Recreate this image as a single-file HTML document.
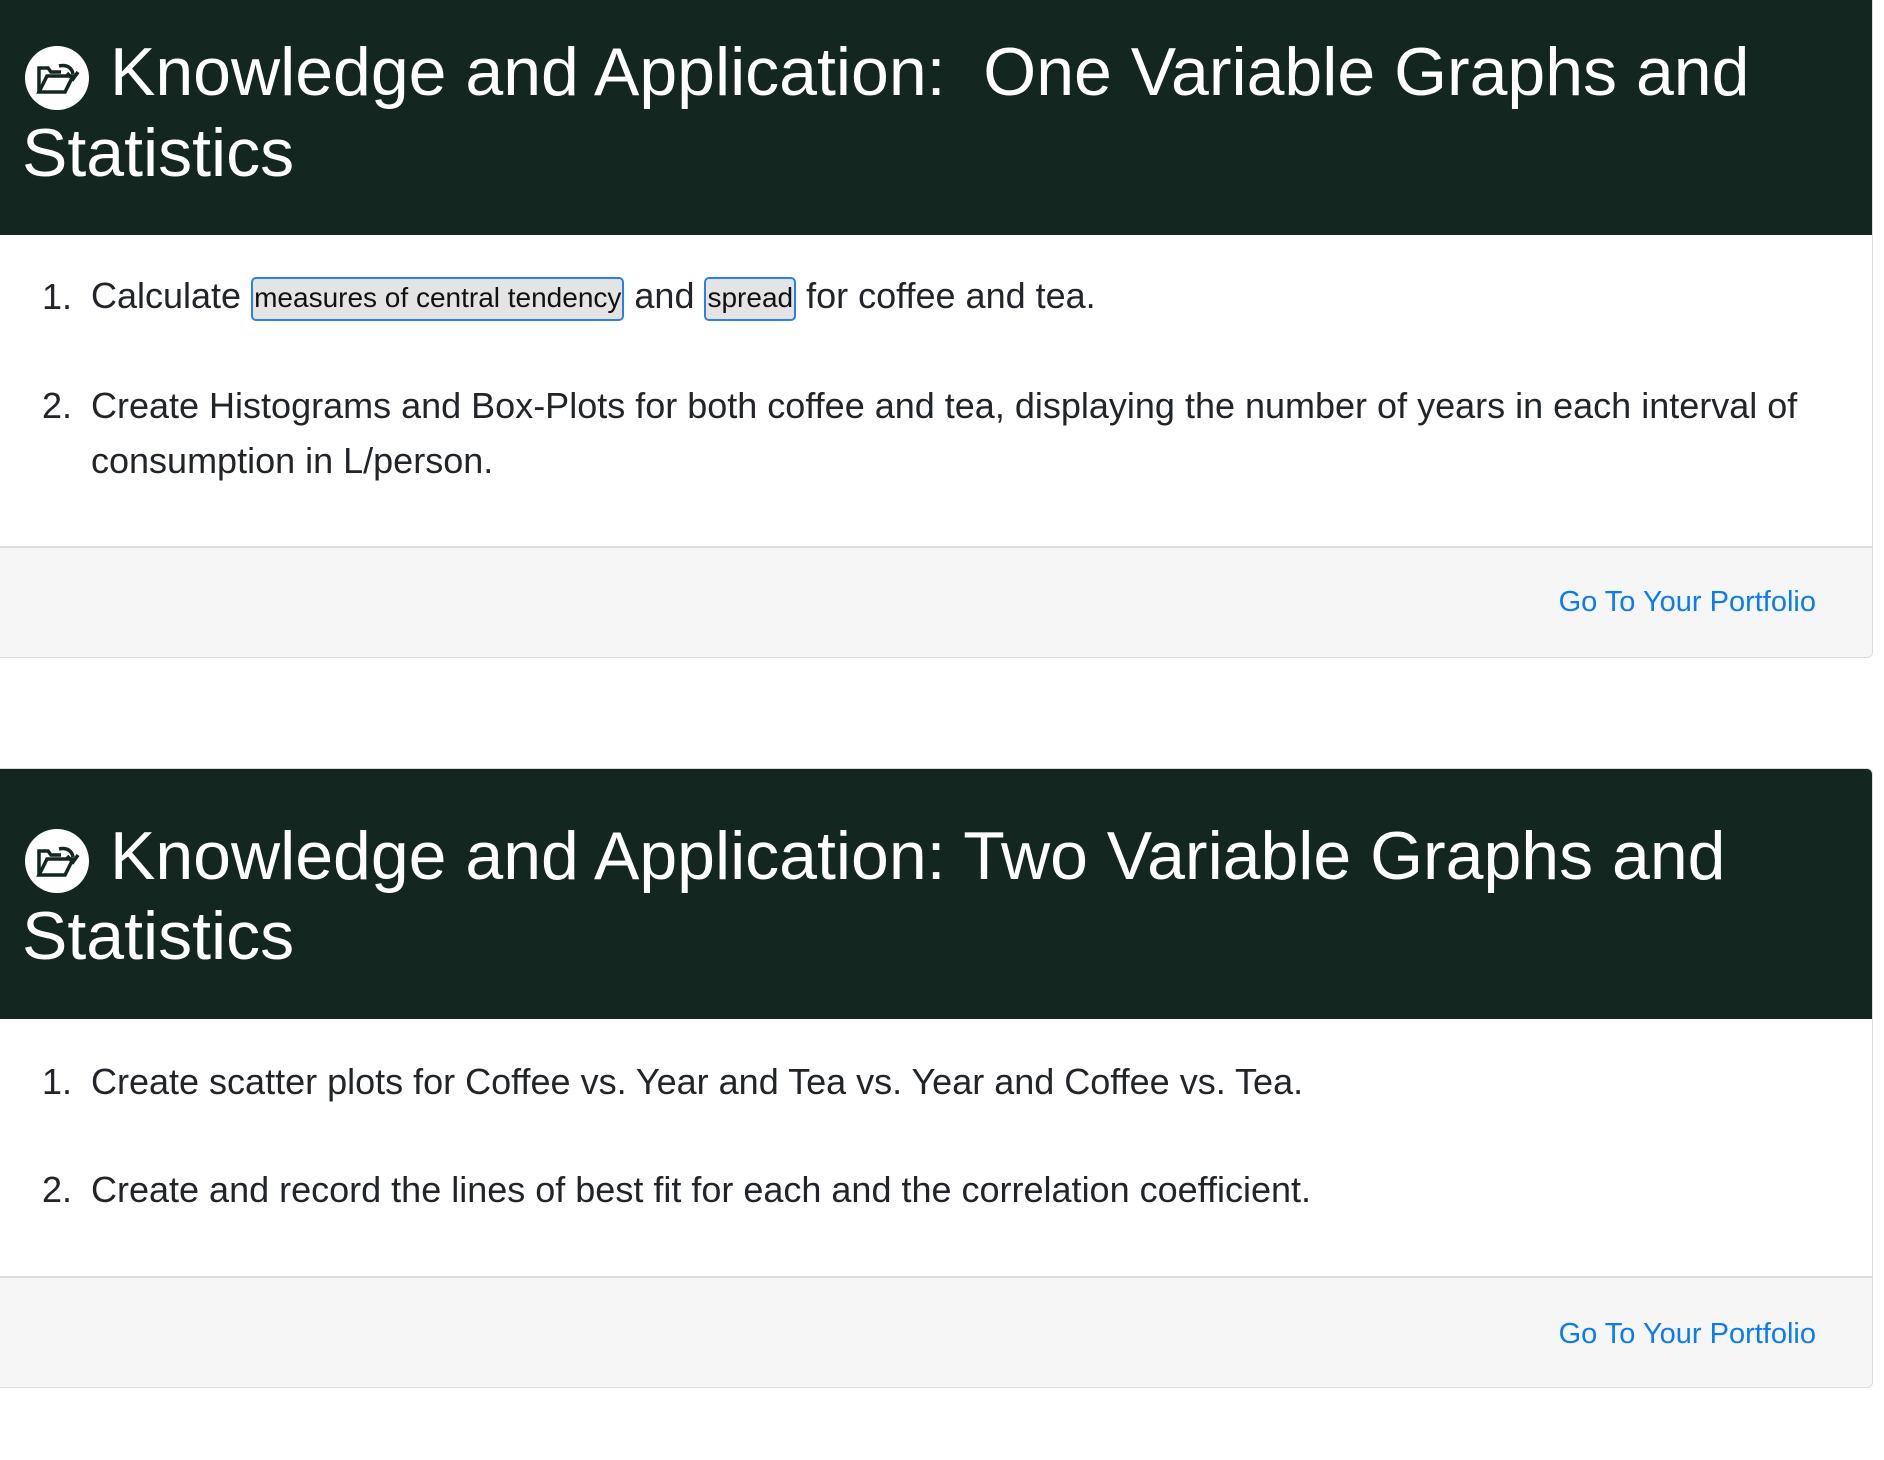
<!DOCTYPE html>
<html><head><meta charset="utf-8"><style>
html,body{margin:0;padding:0;background:#fff;width:1884px;height:1460px;overflow:hidden;font-family:"Liberation Sans",Arial,sans-serif;color:#212529}
.abs{position:absolute}
.card{position:absolute;left:0;width:1872px;border:1px solid #dcdcdc;border-left:none;border-radius:0 6px 6px 0;background:#fff;overflow:hidden}
.hd{position:absolute;left:0;right:0;top:0;background:#13261f}
.ft{position:absolute;left:0;right:0;background:#f6f6f6;border-top:2px solid #dcdcdc}
.t{position:absolute;left:0;white-space:nowrap;color:#fff;font-size:68px;line-height:1}
.li{position:absolute;font-size:36px;white-space:nowrap;line-height:1}
.link{position:absolute;right:56px;font-size:29px;color:#0a7bf5;white-space:nowrap;line-height:1}
.chip{display:inline-block;background:#e4e4e4;border:2px solid #2a7ff0;border-radius:5px;font-size:28px;color:#111;padding:5px 1px 7px;vertical-align:1px;line-height:1}
</style></head><body>

<div class="card" style="top:-10px;height:666px">
  <div class="hd" style="height:244px"></div>
  <svg class="abs" style="left:25px;top:55px" width="64" height="64" viewBox="0 0 64 64"><circle cx="32" cy="32" r="32" fill="#fff"/><path d="M14 46V22h9l3 4h10" fill="none" stroke="#13261f" stroke-width="3.5"/><path d="M14 46l8-16h26l-8 16z" fill="none" stroke="#13261f" stroke-width="3.5"/><path d="M34 20c8-2 13 2 14 8" fill="none" stroke="#13261f" stroke-width="3.5"/><path d="M42 27l6 6 5-7" fill="none" stroke="#13261f" stroke-width="3.5"/></svg>
  <div class="t" style="left:110px;top:47px">Knowledge and Application:&nbsp; One Variable Graphs and</div>
  <div class="t" style="left:22px;top:128px">Statistics</div>
  <div class="li" style="left:42px;top:288px">1.</div>
  <div class="li" style="left:91px;top:286px">Calculate <span class="chip">measures of central tendency</span> and <span class="chip">spread</span> for coffee and tea.</div>
  <div class="li" style="left:42px;top:397px">2.</div>
  <div class="li" style="left:91px;top:397px">Create Histograms and Box-Plots for both coffee and tea, displaying the number of years in each interval of</div>
  <div class="li" style="left:91px;top:452px">consumption in L/person.</div>
  <div class="ft" style="top:555px;height:111px"></div>
  <div class="link" style="top:597px">Go To Your Portfolio</div>
</div>

<div class="card" style="top:768px;height:618px">
  <div class="hd" style="height:250px"></div>
  <svg class="abs" style="left:25px;top:60px" width="64" height="64" viewBox="0 0 64 64"><circle cx="32" cy="32" r="32" fill="#fff"/><path d="M14 46V22h9l3 4h10" fill="none" stroke="#13261f" stroke-width="3.5"/><path d="M14 46l8-16h26l-8 16z" fill="none" stroke="#13261f" stroke-width="3.5"/><path d="M34 20c8-2 13 2 14 8" fill="none" stroke="#13261f" stroke-width="3.5"/><path d="M42 27l6 6 5-7" fill="none" stroke="#13261f" stroke-width="3.5"/></svg>
  <div class="t" style="left:110px;top:53px">Knowledge and Application: Two Variable Graphs and</div>
  <div class="t" style="left:22px;top:133px">Statistics</div>
  <div class="li" style="left:42px;top:295px">1.</div>
  <div class="li" style="left:91px;top:295px">Create scatter plots for Coffee vs. Year and Tea vs. Year and Coffee vs. Tea.</div>
  <div class="li" style="left:42px;top:403px">2.</div>
  <div class="li" style="left:91px;top:403px">Create and record the lines of best fit for each and the correlation coefficient.</div>
  <div class="ft" style="top:507px;height:111px"></div>
  <div class="link" style="top:551px">Go To Your Portfolio</div>
</div>

</body></html>
